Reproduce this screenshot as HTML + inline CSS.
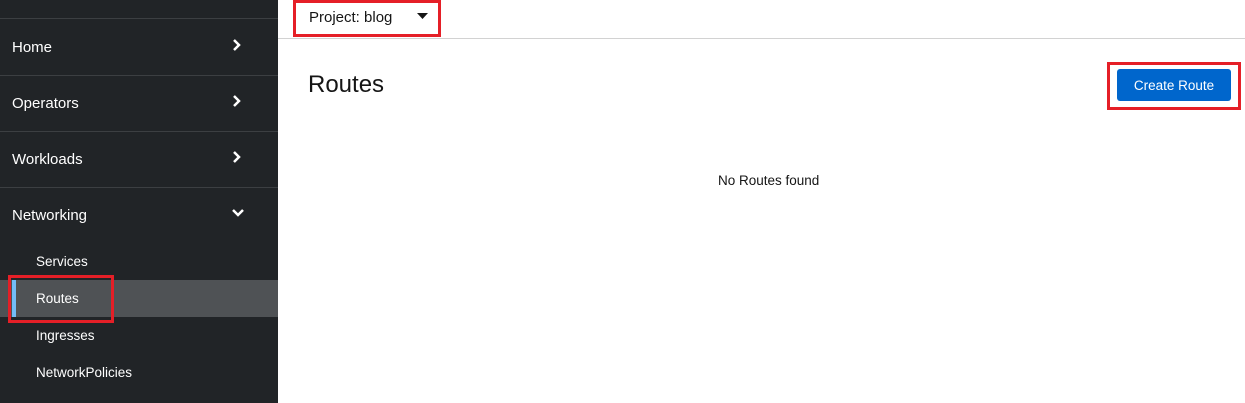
<!DOCTYPE html><html><head><style>
body{margin:0;width:1245px;height:403px;overflow:hidden;font-family:"Liberation Sans",sans-serif;background:#fff;position:relative}
.sb{position:absolute;left:0;top:0;width:278px;height:403px;background:#212427}
.sep{position:absolute;left:0;width:278px;height:1px;background:#3c3f42}
.it{position:absolute;left:12px;color:#fff;font-size:15px}
.chev{position:absolute;left:232px}
.sub{position:absolute;left:36px;color:#fff;font-size:13.5px}
.a{position:absolute}
</style></head><body>
<div class="sb">
<div class="sep" style="top:18px"></div>
<div class="sep" style="top:75px"></div>
<div class="sep" style="top:131px"></div>
<div class="sep" style="top:187px"></div>
<div class="it" style="top:39px">Home</div>
<div class="it" style="top:95px">Operators</div>
<div class="it" style="top:151px">Workloads</div>
<div class="it" style="top:207px">Networking</div>
<svg class="chev" style="top:39px" width="10" height="12" viewBox="0 0 10 12"><path d="M2 1l5 5-5 5" stroke="#fff" stroke-width="2.5" fill="none"/></svg>
<svg class="chev" style="top:95px" width="10" height="12" viewBox="0 0 10 12"><path d="M2 1l5 5-5 5" stroke="#fff" stroke-width="2.5" fill="none"/></svg>
<svg class="chev" style="top:151px" width="10" height="12" viewBox="0 0 10 12"><path d="M2 1l5 5-5 5" stroke="#fff" stroke-width="2.5" fill="none"/></svg>
<svg class="chev" style="top:208px" width="12" height="10" viewBox="0 0 12 10"><path d="M1 2l5 5 5-5" stroke="#fff" stroke-width="2.5" fill="none"/></svg>
<div class="sub" style="top:254px">Services</div>
<div class="a" style="left:0;top:280px;width:278px;height:37px;background:#4f5255"></div>
<div class="a" style="left:12px;top:280px;width:4px;height:37px;background:#73bcf7"></div>
<div class="sub" style="top:291px">Routes</div>
<div class="a" style="left:8px;top:275px;width:100px;height:42px;border:3px solid #e51f27"></div>
<div class="sub" style="top:328px">Ingresses</div>
<div class="sub" style="top:365px">NetworkPolicies</div>
</div>
<div class="a" style="left:278px;top:38px;width:967px;height:1px;background:#d2d2d2"></div>
<div class="a" style="left:293px;top:0;width:142px;height:31px;border:3px solid #e51f27"></div>
<div class="a" style="left:309px;top:9px;font-size:15px;color:#151515">Project: blog</div>
<svg class="a" style="left:417px;top:13px" width="11" height="7"><path d="M0 0h11L5.5 6z" fill="#151515"/></svg>
<div class="a" style="left:308px;top:71px;font-size:24px;color:#151515">Routes</div>
<div class="a" style="left:1107px;top:62px;width:128px;height:42px;border:3px solid #e51f27"></div>
<div class="a" style="left:1117px;top:69px;width:114px;height:32px;background:#0066cc;border-radius:3px;color:#fff;font-size:13.5px;line-height:33px;text-align:center">Create Route</div>
<div class="a" style="left:718px;top:173px;font-size:13.5px;color:#151515">No Routes found</div>
</body></html>
